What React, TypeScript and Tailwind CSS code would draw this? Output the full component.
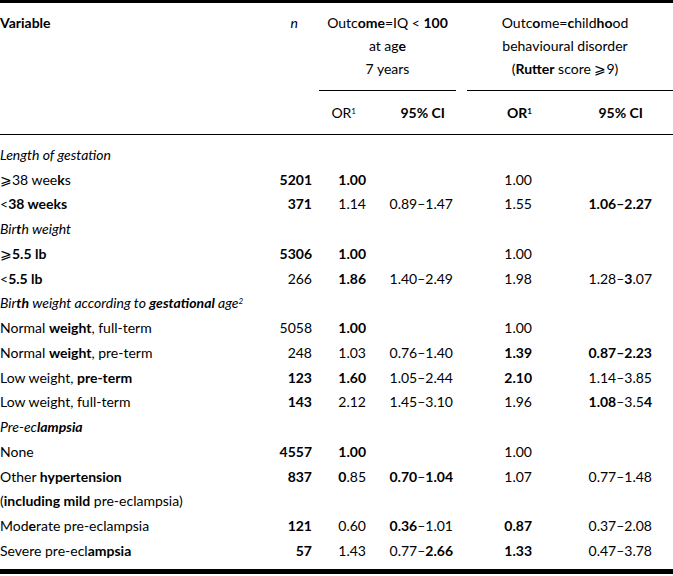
import type { ReactNode } from "react";

const B = ({ children }: { children: ReactNode }) => (
  <span className="font-bold">{children}</span>
);

type Row = {
  label: ReactNode;
  section?: boolean;
  n?: ReactNode;
  or1?: ReactNode;
  ci1?: ReactNode;
  or2?: ReactNode;
  ci2?: ReactNode;
};

// weights follow the reference scan, which is bold in patches
const rows: Row[] = [
  { label: "Length of gestation", section: true },
  { label: <>⩾38 wee<B>k</B>s</>, n: <B>5201</B>, or1: <B>1.00</B>, or2: "1.00" },
  {
    label: <>&lt;<B>38 weeks</B></>,
    n: <B>371</B>,
    or1: "1.14",
    ci1: "0.89–1.47",
    or2: "1.55",
    ci2: <B>1.06–2.27</B>,
  },
  { label: <>Bir<B>t</B>h weight</>, section: true },
  { label: <>⩾<B>5.5 lb</B></>, n: <B>5306</B>, or1: <B>1.00</B>, or2: "1.00" },
  {
    label: <>&lt;<B>5.5 lb</B></>,
    n: "266",
    or1: <B>1.86</B>,
    ci1: "1.40–2.49",
    or2: "1.98",
    ci2: <>1.28–<B>3</B>.07</>,
  },
  {
    label: (
      <>
        Bir<B>th</B> weight according to <B>gestational</B> age<sup className="text-[8px]">2</sup>
      </>
    ),
    section: true,
  },
  { label: <>Normal <B>weight</B>, full-term</>, n: "5058", or1: <B>1.00</B>, or2: "1.00" },
  {
    label: <>Normal <B>weight</B>, pre-term</>,
    n: "248",
    or1: "1.03",
    ci1: "0.76–1.40",
    or2: <B>1.39</B>,
    ci2: <B>0.87–2.23</B>,
  },
  {
    label: <>Low weight, <B>pre-term</B></>,
    n: <B>123</B>,
    or1: <B>1.60</B>,
    ci1: "1.05–2.44",
    or2: <B>2.10</B>,
    ci2: "1.14–3.85",
  },
  {
    label: "Low weight, full-term",
    n: <B>143</B>,
    or1: "2.12",
    ci1: "1.45–3.10",
    or2: "1.96",
    ci2: <><B>1.08</B>–3.5<B>4</B></>,
  },
  { label: <>Pre-ec<B>lampsia</B></>, section: true },
  { label: "None", n: <B>4557</B>, or1: <B>1.00</B>, or2: "1.00" },
  {
    label: <>Other <B>hypertension</B></>,
    n: <B>837</B>,
    or1: <><B>0</B>.85</>,
    ci1: <><B>0.70</B>–<B>1.04</B></>,
    or2: "1.07",
    ci2: "0.77–1.48",
  },
  { label: <>(<B>including mild</B> pre-eclampsia)</> },
  {
    label: <>Mod<B>e</B>rate pre-eclampsia</>,
    n: <B>121</B>,
    or1: "0.60",
    ci1: <><B>0.36</B>–1.01</>,
    or2: <B>0.87</B>,
    ci2: "0.37–2.08",
  },
  {
    label: <>Severe pre-ecl<B>ampsia</B></>,
    n: <B>57</B>,
    or1: "1.43",
    ci1: <>0.77–<B>2.66</B></>,
    or2: <B>1.33</B>,
    ci2: "0.47–3.78",
  },
];

const grid = "grid grid-cols-[260px_52px_54px_87px_79px_120px] pr-[21px]";

function App() {
  return (
    <div
      className="w-[673px] h-[576px] bg-white text-black text-[14px] leading-[23px]"
      style={{ fontFamily: "Lato, 'Open Sans', sans-serif" }}
    >
      <div className="border-t-[3px] border-black">
        {/* group headers */}
        <div className="flex items-start pt-[8px]">
          <div className="w-[319px] flex justify-between pr-[21px]">
            <span className="font-bold">Variable</span>
            <span className="italic">n</span>
          </div>
          <div className="w-[137px] flex flex-col">
            <div className="flex flex-col items-center">
              <span>
                Outc<B>ome</B>=IQ &lt; <B>100</B>
              </span>
              <span>
                at ag<B>e</B>
              </span>
              <span>7 years</span>
            </div>
            <div className="mt-[10px] border-t border-black" />
          </div>
          <div className="ml-[11px] w-[206px] flex flex-col">
            <div className="flex flex-col items-center pr-[10px]">
              <span>
                Outc<B>o</B>me=<B>c</B>hild<B>ho</B>od
              </span>
              <span>behavioural disorder</span>
              <span>
                (<B>Rutter</B> score ⩾9)
              </span>
            </div>
            <div className="mt-[10px] border-t border-black" />
          </div>
        </div>

        {/* sub headers */}
        <div className={`${grid} py-[10px] border-b border-black`}>
          <div />
          <div />
          <div className="text-right pr-[10px]">
            OR<sup className="text-[8px]">1</sup>
          </div>
          <div className="text-right pr-[8px] font-bold">95% CI</div>
          <div className="text-right font-bold">
            OR<sup className="text-[8px]">1</sup>
          </div>
          <div className="text-right pr-[9px] font-bold">95% CI</div>
        </div>

        {/* body */}
        <div className="pt-[7px] pb-[6px] border-b-[5px] border-black">
          {rows.map((r, i) => (
            <div key={i} className={`${grid} h-[24.75px] items-center`}>
              <div className={`whitespace-nowrap ${r.section ? "italic" : ""}`}>
                {r.label}
              </div>
              <div className="text-right">{r.n}</div>
              <div className="text-right">{r.or1}</div>
              <div className="text-right">{r.ci1}</div>
              <div className="text-right">{r.or2}</div>
              <div className="text-right">{r.ci2}</div>
            </div>
          ))}
        </div>
      </div>
    </div>
  );
}

export default App;
